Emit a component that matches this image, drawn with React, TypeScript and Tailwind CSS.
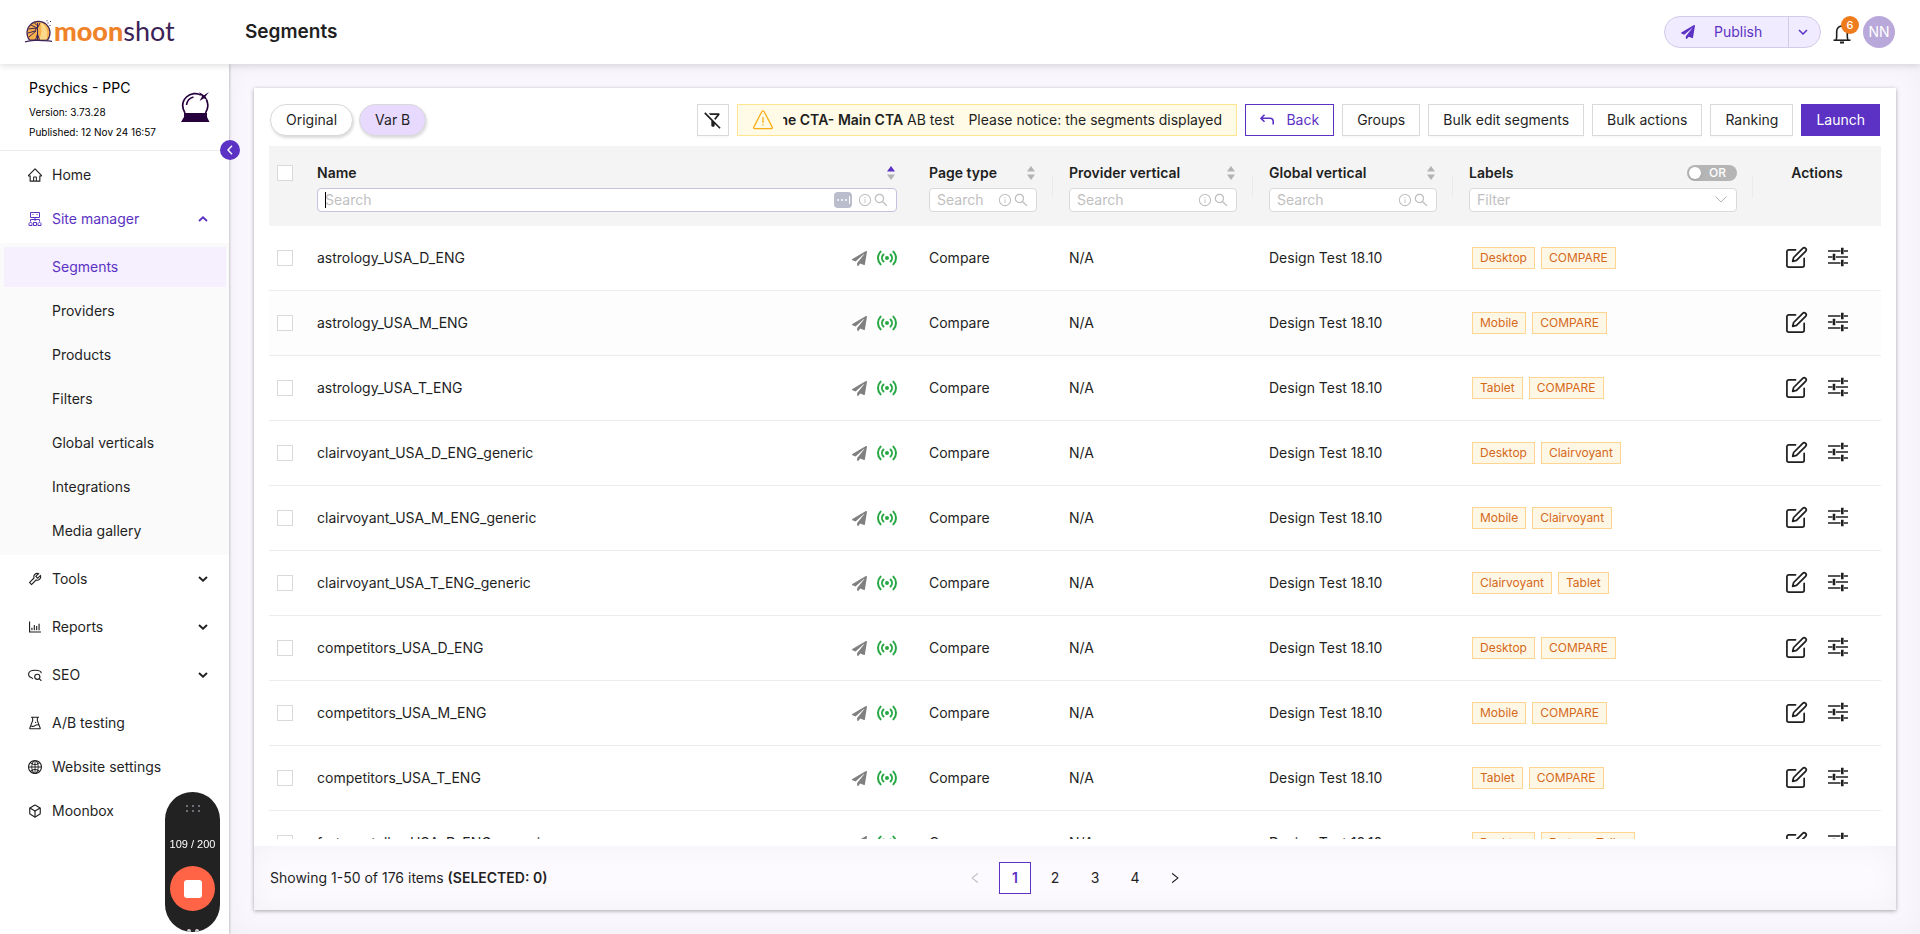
import { useState } from 'react';
import type { ReactNode } from 'react';
import clsx from 'clsx';
import {
  AiOutlineBarChart,
  AiOutlineExperiment,
  AiOutlineGlobal,
  AiOutlineHome,
  AiOutlineInfoCircle,
  AiOutlineLeft,
  AiOutlineRight,
  AiOutlineSearch,
  AiOutlineTool,
} from 'react-icons/ai';
import { FaPaperPlane } from 'react-icons/fa';
import { FiBox, FiEdit } from 'react-icons/fi';
import { HiOutlineStatusOnline } from 'react-icons/hi';
import { MdOutlineFilterAltOff } from 'react-icons/md';

const SUB_ITEMS = [
  'Segments',
  'Providers',
  'Products',
  'Filters',
  'Global verticals',
  'Integrations',
  'Media gallery',
];

const ROWS = [
  { name: 'astrology_USA_D_ENG', labels: ['Desktop', 'COMPARE'] },
  { name: 'astrology_USA_M_ENG', labels: ['Mobile', 'COMPARE'] },
  { name: 'astrology_USA_T_ENG', labels: ['Tablet', 'COMPARE'] },
  { name: 'clairvoyant_USA_D_ENG_generic', labels: ['Desktop', 'Clairvoyant'] },
  { name: 'clairvoyant_USA_M_ENG_generic', labels: ['Mobile', 'Clairvoyant'] },
  { name: 'clairvoyant_USA_T_ENG_generic', labels: ['Clairvoyant', 'Tablet'] },
  { name: 'competitors_USA_D_ENG', labels: ['Desktop', 'COMPARE'] },
  { name: 'competitors_USA_M_ENG', labels: ['Mobile', 'COMPARE'] },
  { name: 'competitors_USA_T_ENG', labels: ['Tablet', 'COMPARE'] },
  { name: 'fortune_teller_USA_D_ENG_generic', labels: ['Desktop', 'Fortune Teller'] },
];

/* ---------- Icons ---------- */

function MoonMark() {
  return (
    <svg viewBox="0 0 27 23" className="h-[23px] w-[27px]" fill="none">
      <path d="M4.500 20A11.500 11.500 0 1 1 22.500 20Z" fill="#f9b04c" stroke="#3b2257" strokeWidth="1.200" />
      <path d="M15 2.500c5 1 9 7 6.500 17H14c3-5 3-12 1-17Z" fill="#fcd98a" />
      <path d="M12.500 3v17M10.500 20l2-6 2 6M6 5l6 3M3.500 9l8-1M3 13l7-2 2-4M4 17l7-6M9 2.500l3 3M15 3l-2 4" stroke="#3b2257" strokeWidth="1" />
      <path d="M0 22c5-2 9-2 13.500-1.500S22 20 27 21.500" stroke="#3b2257" strokeWidth="1.200" />
      <path d="M22.500 3h1M24.500 5.500h1M25 1.500h1M21.500.8h1" stroke="#3b2257" />
    </svg>
  );
}

function CrystalBall() {
  return (
    <svg viewBox="0 0 29 30" className="h-[30px] w-[29px]" fill="none">
      <path d="M4 21C.5 15 1.500 9 5.500 5S16 .8 20 3M25.500 8c2 4 1.500 9-1 13" stroke="#26003d" strokeWidth="1.700" />
      <path d="M5.500 13c.5-4 3-7 7-8" stroke="#26003d" strokeWidth="1.500" />
      <path d="M3 21h23v4l2.500 5H0l3-5Z" fill="#26003d" />
      <path d="M18 0l5 3.300L28 0l-3.500 4.500L27 9l-4-2.700L18.500 9l2.500-4.500Z" fill="#26003d" />
    </svg>
  );
}

function SiteManagerIcon() {
  return (
    <svg viewBox="0 0 14 14" className="size-3.5" fill="none" stroke="currentColor">
      <path d="M2.500.5h9v5h-9zM4.500 2.500h1M8.500 2.500h1M7 5.500V9M2.500 9.500V7.500h9v2" />
      <path d="M1 13.500v-2l1.500-1.500 1.500 1.500v2zM5.500 13.500v-3h3v3zM10 13.500v-2l1.500-1.500 1.500 1.500v2z" />
    </svg>
  );
}

function SeoIcon() {
  return (
    <svg viewBox="0 0 14 14" className="size-3.5" fill="none" stroke="currentColor" strokeWidth="1.100">
      <path d="M4 9.800C1.800 9.300.6 8 .6 6.200.6 3.500 3 2.200 7 2.200s6.300 1 6.300 3" />
      <path d="M4 9.800l.8 1" />
      <circle cx="9.300" cy="8.800" r="2.600" />
      <path d="M11.200 10.700l2.200 2.200" />
    </svg>
  );
}

function BellIcon() {
  return (
    <svg viewBox="0 0 18 20" className="h-5 w-[18px]" fill="none" stroke="#1f1f1f" strokeWidth="1.600">
      <path d="M.5 16.200h17" />
      <path d="M3.200 16C4.500 12 3 8 4 5.500 5 3 7 2 9 2s4 1 5 3.500c1 2.500-.5 6.500.8 10.500" />
      <path d="M7 18.500h4" strokeWidth="2" />
    </svg>
  );
}

function WarningIcon() {
  return (
    <svg viewBox="0 0 20 20" className="size-5 shrink-0" fill="none" stroke="#faad14" strokeWidth="1.300">
      <path d="M8.900 1.500a1.300 1.300 0 0 1 2.200 0l8 15.300a1.200 1.200 0 0 1-1.100 1.900H2a1.200 1.200 0 0 1-1.100-1.900Z" />
      <path d="M10 7v6M10 14.200v1.400" />
    </svg>
  );
}

function BackIcon() {
  return (
    <svg viewBox="0 0 14 12" className="h-3 w-3.5" fill="none" stroke="currentColor" strokeWidth="1.600">
      <path d="M4.500.8L1 4.300l3.500 3.500M1 4.300h9.200a3 3 0 0 1 3 3v3.200" />
    </svg>
  );
}

function TuneIcon() {
  return (
    <svg viewBox="0 0 20 20" className="size-5" fill="none" stroke="#1f1f1f" strokeWidth="1.500">
      <path d="M0 4h12.500M16 4h4M0 10h4.500M8 10h12M0 16h12.500M16 16h4" />
      <path d="M14.300.8v6.400M6 6.800v6.400M14.300 12.800v6.400" strokeWidth="2.600" />
    </svg>
  );
}

function Chevron({ up }: { up?: boolean }) {
  return (
    <svg viewBox="0 0 10 6" className="ml-auto h-1.5 w-2.5" fill="none" stroke="currentColor" strokeWidth="1.900">
      <path d={up ? 'M1 5l4-3.600L9 5' : 'M1 1l4 3.600L9 1'} />
    </svg>
  );
}

function SortIcon({ active }: { active?: boolean }) {
  return (
    <svg viewBox="0 0 8 14" className="h-3.5 w-2">
      <path d="M4 0l4 5.500H0z" fill={active ? '#5b32c4' : '#b3b3b3'} />
      <path d="M4 14l4-5.500H0z" fill="#b3b3b3" />
    </svg>
  );
}

/* ---------- Sidebar ---------- */

interface MenuItemProps {
  icon: ReactNode;
  label: string;
  arrow?: 'up' | 'down';
}

function MenuItem({ icon, label, arrow }: MenuItemProps) {
  return (
    <a
      href="#"
      className={clsx(
        'flex h-10 items-center pl-7 pr-[21px]',
        arrow === 'up' ? 'text-[#5b32c4]' : 'text-[#1f1f1f]'
      )}
    >
      <span className="mr-2.5 flex w-3.5 justify-center">{icon}</span>
      {label}
      {arrow && <Chevron up={arrow === 'up'} />}
    </a>
  );
}

function Sidebar() {
  return (
    <aside className="relative z-10 flex w-[229px] shrink-0 flex-col bg-white shadow-[0_0_3px_rgba(0,0,0,0.35)]">
      <div className="flex h-[87px] shrink-0 items-center justify-between border-b border-[#ececec] pl-[29px] pr-[19px] text-black">
        <div className="flex flex-col gap-1 pt-1.5">
          <p className="mb-1 text-sm leading-4">Psychics - PPC</p>
          <p className="text-[10px] leading-4">Version: 3.73.28</p>
          <p className="text-[10px] leading-4">Published: 12 Nov 24 16:57</p>
        </div>
        <CrystalBall />
      </div>
      <button
        aria-label="Collapse menu"
        className="absolute -right-[11px] top-19 flex size-5 items-center justify-center rounded-full bg-[#5b32c4] text-white"
      >
        <svg viewBox="0 0 6 10" className="h-2.5 w-1.5" fill="none" stroke="currentColor" strokeWidth="1.400">
          <path d="M5 .8L1 5l4 4.200" />
        </svg>
      </button>

      <nav className="pt-1">
        <MenuItem icon={<AiOutlineHome className="size-4 shrink-0" />} label="Home" />
        <div className="mt-1">
          <MenuItem icon={<SiteManagerIcon />} label="Site manager" arrow="up" />
        </div>
        <ul className="mt-1 flex flex-col gap-1 bg-[#fafafa] py-1">
          {SUB_ITEMS.map((item, i) => (
            <li key={item}>
              <a
                href="#"
                className={clsx(
                  'ml-1 mr-[3px] flex h-10 items-center pl-12',
                  i === 0 ? 'bg-[#f5effe] text-[#5b32c4]' : 'text-[#1f1f1f]'
                )}
              >
                {item}
              </a>
            </li>
          ))}
        </ul>
        <div className="flex flex-col gap-2 pt-1">
          <MenuItem icon={<AiOutlineTool className="size-4 shrink-0" />} label="Tools" arrow="down" />
          <MenuItem icon={<AiOutlineBarChart className="size-4 shrink-0" />} label="Reports" arrow="down" />
          <MenuItem icon={<SeoIcon />} label="SEO" arrow="down" />
        </div>
        <div className="mt-2 flex flex-col gap-1">
          <MenuItem icon={<AiOutlineExperiment className="size-4 shrink-0" />} label="A/B testing" />
          <MenuItem icon={<AiOutlineGlobal className="size-4 shrink-0" />} label="Website settings" />
          <MenuItem icon={<FiBox className="size-3.5" />} label="Moonbox" />
        </div>
      </nav>
    </aside>
  );
}

/* ---------- Header ---------- */

function Header() {
  return (
    <header className="relative z-20 flex h-16 shrink-0 items-center bg-white pr-[25px] shadow-[0_2px_6px_rgba(0,0,0,0.12)]">
      <a href="#" className="flex w-[245px] items-center pb-0.5 pl-[25px] font-[Lato,sans-serif] text-[27px] leading-8">
        <MoonMark />
        <span className="ml-0.5 font-black text-[#f0822a]">moon</span>
        <span className="font-normal text-[#3b2257]">shot</span>
      </a>
      <h1 className="text-[19px] font-semibold text-[#1f1f1f]">Segments</h1>

      <div className="ml-auto flex items-center">
        <div className="flex h-8 w-[157px] rounded-full border border-[#d3cbe8] bg-[#f1ebff] text-[#5b32c4]">
          <button className="flex flex-1 items-center gap-[19px] pl-4">
            <FaPaperPlane className="size-3.5" />
            Publish
          </button>
          <button aria-label="Publish options" className="flex w-8 items-center justify-center border-l border-[#d3cbe8] pr-1">
            <svg viewBox="0 0 10 6" className="h-1.5 w-2.5" fill="none" stroke="currentColor" strokeWidth="1.500">
              <path d="M1 1l4 4 4-4" />
            </svg>
          </button>
        </div>
        <button aria-label="Notifications" className="relative ml-3 mr-3 pt-1">
          <BellIcon />
          <span className="absolute -right-2 -top-1 flex size-[18px] items-center justify-center rounded-full bg-[#ee7b1c] text-[11px] font-medium text-white">
            6
          </span>
        </button>
        <span className="flex size-8 items-center justify-center rounded-full bg-[#b9a9da] text-sm text-white">NN</span>
      </div>
    </header>
  );
}

/* ---------- Toolbar ---------- */

function ToolButton({ children }: { children: ReactNode }) {
  return (
    <button className="h-8 whitespace-nowrap border border-[#d9d9d9] bg-white px-3.5 text-[#1f1f1f] shadow-[0_2px_0_rgba(0,0,0,0.02)]">
      {children}
    </button>
  );
}

function Toolbar() {
  return (
    <div className="flex items-center justify-between px-4">
      <div className="flex gap-1.5">
        <button className="h-8 rounded-full border border-[#d9d9d9] bg-white px-[15px] shadow-[1px_2px_3px_rgba(0,0,0,0.15)]">
          Original
        </button>
        <button className="h-8 rounded-full border border-[#d9d9d9] bg-[#e8daff] px-[15px] shadow-[1px_2px_3px_rgba(0,0,0,0.15)]">
          Var B
        </button>
      </div>

      <div className="flex gap-2">
        <button
          aria-label="Clear filters"
          className="flex size-8 items-center justify-center border border-[#d9d9d9] bg-white shadow-[0_2px_0_rgba(0,0,0,0.02)]"
        >
          <MdOutlineFilterAltOff className="size-5" />
        </button>
        <div className="flex h-8 w-[500px] items-center gap-2.5 border border-[#ffe58f] bg-[#fffbe6] pl-[15px] pr-3">
          <WarningIcon />
          <div className="flex min-w-0 flex-1 gap-3.5 overflow-hidden whitespace-nowrap">
            <p className="-ml-1">
              <b className="font-semibold">ne CTA- Main CTA</b> AB test
            </p>
            <p>Please notice: the segments displayed here</p>
          </div>
        </div>
        <button className="flex h-8 items-center gap-3 border border-[#5b32c4] bg-white px-3.5 text-[#5b32c4]">
          <BackIcon />
          Back
        </button>
        <ToolButton>Groups</ToolButton>
        <ToolButton>Bulk edit segments</ToolButton>
        <ToolButton>Bulk actions</ToolButton>
        <ToolButton>Ranking</ToolButton>
        <button className="h-8 bg-[#5b32c4] px-[15px] text-white">Launch</button>
      </div>
    </div>
  );
}

/* ---------- Table ---------- */

interface SearchColumnProps {
  title: string;
  sorted?: boolean;
  separator?: boolean;
}

function SearchColumn({ title, sorted, separator }: SearchColumnProps) {
  return (
    <th className="relative px-4 text-left font-semibold">
      <div className="flex h-[22px] items-center justify-between pr-0.5">
        {title}
        <SortIcon active={sorted} />
      </div>
      <div
        className={clsx(
          'relative mt-1 flex h-6 items-center rounded border bg-white px-[7px] text-[#bfbfbf]',
          sorted ? 'border-[#c5c1de]' : 'border-[#d9d9d9]'
        )}
      >
        {sorted && <span className="absolute left-[7px] h-4 w-px bg-black" />}
        <input
          type="text"
          aria-label={`Search ${title}`}
          placeholder="Search"
          className="w-0 min-w-0 flex-1 font-normal text-[#1f1f1f] outline-none placeholder:text-[#bfbfbf]"
        />
        {sorted && (
          <span className="mr-1.5 flex h-4 w-[18px] items-center justify-center gap-0.5 rounded-sm bg-[#b9bdcc]">
            <i className="size-0.5 rounded-full bg-white" />
            <i className="size-0.5 rounded-full bg-white" />
            <i className="size-0.5 rounded-full bg-white" />
            <i className="h-2 w-px bg-white" />
          </span>
        )}
        <AiOutlineInfoCircle className="size-3.5" />
        <AiOutlineSearch className="ml-px size-4" />
      </div>
      {separator && <span className="absolute right-0 top-[30px] h-[22px] w-px bg-[#ebebeb]" />}
    </th>
  );
}

function Checkbox({ label }: { label: string }) {
  return (
    <input
      type="checkbox"
      aria-label={label}
      className="block size-4 appearance-none border border-[#d9d9d9] bg-white checked:bg-[#5b32c4]"
    />
  );
}

function SegmentsTable() {
  const [isAnd, setIsAnd] = useState(false);

  return (
    <table className="w-full table-fixed border-separate border-spacing-0">
      <colgroup>
        <col className="w-8" />
        <col />
        <col className="w-[140px]" />
        <col className="w-[200px]" />
        <col className="w-[200px]" />
        <col className="w-[300px]" />
        <col className="w-32" />
      </colgroup>
      <thead className="bg-[#f4f4f4]">
        <tr className="h-20 align-top [&>th]:pt-4">
          <th className="pl-2">
            <div className="flex h-[22px] items-center">
              <Checkbox label="Select all" />
            </div>
          </th>
          <SearchColumn title="Name" sorted />
          <SearchColumn title="Page type" separator />
          <SearchColumn title="Provider vertical" separator />
          <SearchColumn title="Global vertical" separator />
          <th className="relative px-4 text-left font-semibold">
            <div className="flex h-[22px] items-center justify-between">
              Labels
              <button
                role="switch"
                aria-checked={isAnd}
                aria-label="Match labels"
                onClick={() => setIsAnd(!isAnd)}
                className="flex h-4 w-[50px] items-center gap-2 rounded-full bg-[#b5b5b5] pl-0.5 text-xs font-medium text-white"
              >
                <span className="size-3 rounded-full bg-white shadow-sm" />
                {isAnd ? 'AND' : 'OR'}
              </button>
            </div>
            <div className="relative mt-1">
              <select
                aria-label="Filter labels"
                className="block h-6 w-full appearance-none rounded border border-[#d9d9d9] bg-white pl-[7px] font-normal text-[#bfbfbf] outline-none"
              >
                <option>Filter</option>
              </select>
              <svg
                viewBox="0 0 12 7"
                className="pointer-events-none absolute right-2.5 top-2 h-[7px] w-3"
                fill="none"
                stroke="#b3b3b3"
              >
                <path d="M.5.5L6 6 11.500.5" />
              </svg>
            </div>
            <span className="absolute right-0 top-[30px] h-[22px] w-px bg-[#ebebeb]" />
          </th>
          <th className="text-center font-semibold">
            <div className="h-[22px]">Actions</div>
          </th>
        </tr>
      </thead>
      <tbody>
        {ROWS.map((row, i) => (
          <tr
            key={row.name}
            className={clsx('h-[65px] [&>td]:border-b [&>td]:border-[#ececec]', i === 1 && 'bg-[#fdfdfd]')}
          >
            <td className="pl-2">
              <Checkbox label={`Select ${row.name}`} />
            </td>
            <td className="px-4">
              <div className="flex items-center justify-between">
                {row.name}
                <span className="flex items-center gap-2">
                  <FaPaperPlane className="size-[15px] text-[#808080]" />
                  <HiOutlineStatusOnline className="-mr-0.5 size-6 text-[#28a745]" />
                </span>
              </div>
            </td>
            <td className="px-4">Compare</td>
            <td className="px-4">N/A</td>
            <td className="px-4">Design Test 18.10</td>
            <td className="px-[19px]">
              <div className="flex gap-1.5">
                {row.labels.map((label) => (
                  <span
                    key={label}
                    className="h-[22px] border border-[#ffd591] bg-[#fff7e6] px-[7px] text-xs leading-5 text-[#d4691a]"
                  >
                    {label}
                  </span>
                ))}
              </div>
            </td>
            <td className="pb-0.5 pr-0.5">
              <div className="flex items-center justify-center gap-5">
                <button aria-label={`Edit ${row.name}`}>
                  <FiEdit className="size-[23px] text-[#1f1f1f]" strokeWidth={1.8} />
                </button>
                <button aria-label={`Configure ${row.name}`}>
                  <TuneIcon />
                </button>
              </div>
            </td>
          </tr>
        ))}
      </tbody>
    </table>
  );
}

/* ---------- Footer ---------- */

function Pagination() {
  return (
    <footer className="grid h-16 shrink-0 grid-cols-[1fr_auto_1fr] items-center bg-[#fcfaff] px-4 shadow-[inset_0_0_30px_rgba(0,0,0,0.04)]">
      <p>
        Showing 1-50 of 176 items <b className="font-semibold">(SELECTED: 0)</b>
      </p>
      <div className="flex gap-2">
        <button aria-label="Previous page" className="flex size-8 items-center justify-center text-[#bfbfbf]">
          <AiOutlineLeft className="size-3.5" />
        </button>
        {[1, 2, 3, 4].map((page) => (
          <button
            key={page}
            className={clsx('size-8', page === 1 && 'border border-[#5b32c4] bg-white font-semibold text-[#5b32c4]')}
          >
            {page}
          </button>
        ))}
        <button aria-label="Next page" className="flex size-8 items-center justify-center">
          <AiOutlineRight className="size-3.5" />
        </button>
      </div>
    </footer>
  );
}

function Recorder() {
  return (
    <div className="fixed bottom-0.5 left-[165px] z-30 flex h-[140px] w-[55px] flex-col items-center overflow-hidden rounded-full bg-[#222] pt-[13px] text-white">
      <div className="grid grid-cols-3 gap-x-1 gap-y-[3px]">
        {Array.from({ length: 6 }, (_, i) => (
          <i key={i} className="size-0.5 rounded-full bg-[#8a8a96]" />
        ))}
      </div>
      <p className="mt-6 font-['Liberation_Sans',sans-serif] text-[11px] leading-4">109 / 200</p>
      <button aria-label="Stop recording" className="mt-3.5 flex size-[45px] shrink-0 items-center justify-center rounded-full bg-[#ff6446]">
        <span className="size-[18px] rounded-[3px] bg-white" />
      </button>
      <div className="mt-auto flex gap-1">
        <i className="h-[3px] w-1 rounded-t bg-[#d0d0d0]" />
        <i className="h-[3px] w-1 rounded-t bg-[#d0d0d0]" />
      </div>
    </div>
  );
}

export default function App() {
  return (
    <div className="flex h-screen flex-col overflow-hidden font-[Inter,sans-serif] text-sm leading-[22px] text-[#1f1f1f]">
      <Header />
      <div className="flex min-h-0 flex-1">
        <Sidebar />
        <main className="flex min-w-0 flex-1 bg-[#faf8fe] py-6 pl-[25px] pr-6 shadow-[inset_0_0_30px_rgba(0,0,0,0.04)]">
          <section className="flex min-w-0 flex-1 flex-col bg-white pt-4 shadow-[0_1px_4px_rgba(0,0,0,0.35)]">
            <Toolbar />
            <div className="mx-[15px] mb-[7px] mt-2.5 min-h-0 flex-1 overflow-hidden">
              <SegmentsTable />
            </div>
            <Pagination />
          </section>
        </main>
      </div>
      <Recorder />
    </div>
  );
}
